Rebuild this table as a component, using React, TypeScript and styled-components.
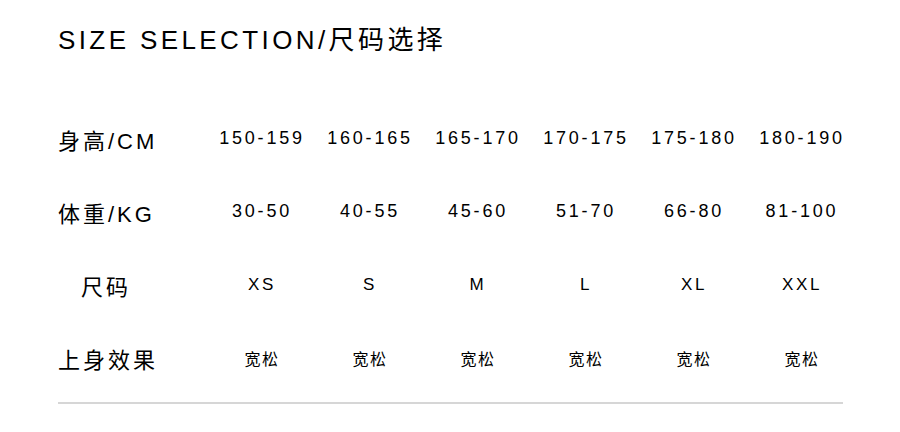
import React from "react";
import styled, { createGlobalStyle } from "styled-components";

const GlobalStyle = createGlobalStyle`
  html, body {
    margin: 0;
    padding: 0;
    background: #ffffff;
  }
  body {
    font-family: "Liberation Sans", "Noto Sans CJK SC", sans-serif;
    color: #000000;
  }
`;

type Row = {
  label: string;
  values: string[];
  kind: "num" | "size" | "fit";
};

const rows: Row[] = [
  {
    label: "身高/CM",
    values: ["150-159", "160-165", "165-170", "170-175", "175-180", "180-190"],
    kind: "num",
  },
  {
    label: "体重/KG",
    values: ["30-50", "40-55", "45-60", "51-70", "66-80", "81-100"],
    kind: "num",
  },
  {
    label: "尺码",
    values: ["XS", "S", "M", "L", "XL", "XXL"],
    kind: "size",
  },
  {
    label: "上身效果",
    values: ["宽松", "宽松", "宽松", "宽松", "宽松", "宽松"],
    kind: "fit",
  },
];

const Page = styled.div`
  width: 900px;
  height: 432px;
  box-sizing: border-box;
  padding: 25px 0 0 58px;
  overflow: hidden;
`;

const Title = styled.h1`
  margin: 0;
  font-size: 26px;
  line-height: 30px;
  font-weight: 400;
  letter-spacing: 3.4px;
  color: #000;
`;

const Table = styled.div`
  margin-top: 47px;
  display: grid;
  grid-template-columns: 150px repeat(6, 108px);
  grid-auto-rows: 73px;
  align-items: center;
`;

const Label = styled.div`
  padding-right: 54px;
  text-align: center;
  font-size: 22px;
  letter-spacing: 3px;
  white-space: nowrap;
`;

const sizes = {
  num: { font: "18px", spacing: "2.8px" },
  size: { font: "17px", spacing: "2.6px" },
  fit: { font: "16px", spacing: "1.5px" },
};

const Cell = styled.div<{ $kind: Row["kind"] }>`
  text-align: center;
  white-space: nowrap;
  font-size: ${(p) => sizes[p.$kind].font};
  letter-spacing: ${(p) => sizes[p.$kind].spacing};
`;

const Divider = styled.hr`
  margin: 8px 0 0 0;
  width: 785px;
  height: 2px;
  border: 0;
  background: #d6d6d6;
`;

export default function App() {
  return (
    <>
      <GlobalStyle />
      <Page>
        <Title>SIZE SELECTION/尺码选择</Title>
        <Table>
          {rows.map((row) => (
            <React.Fragment key={row.label}>
              <Label>{row.label}</Label>
              {row.values.map((v, i) => (
                <Cell key={i} $kind={row.kind}>
                  {v}
                </Cell>
              ))}
            </React.Fragment>
          ))}
        </Table>
        <Divider />
      </Page>
    </>
  );
}
